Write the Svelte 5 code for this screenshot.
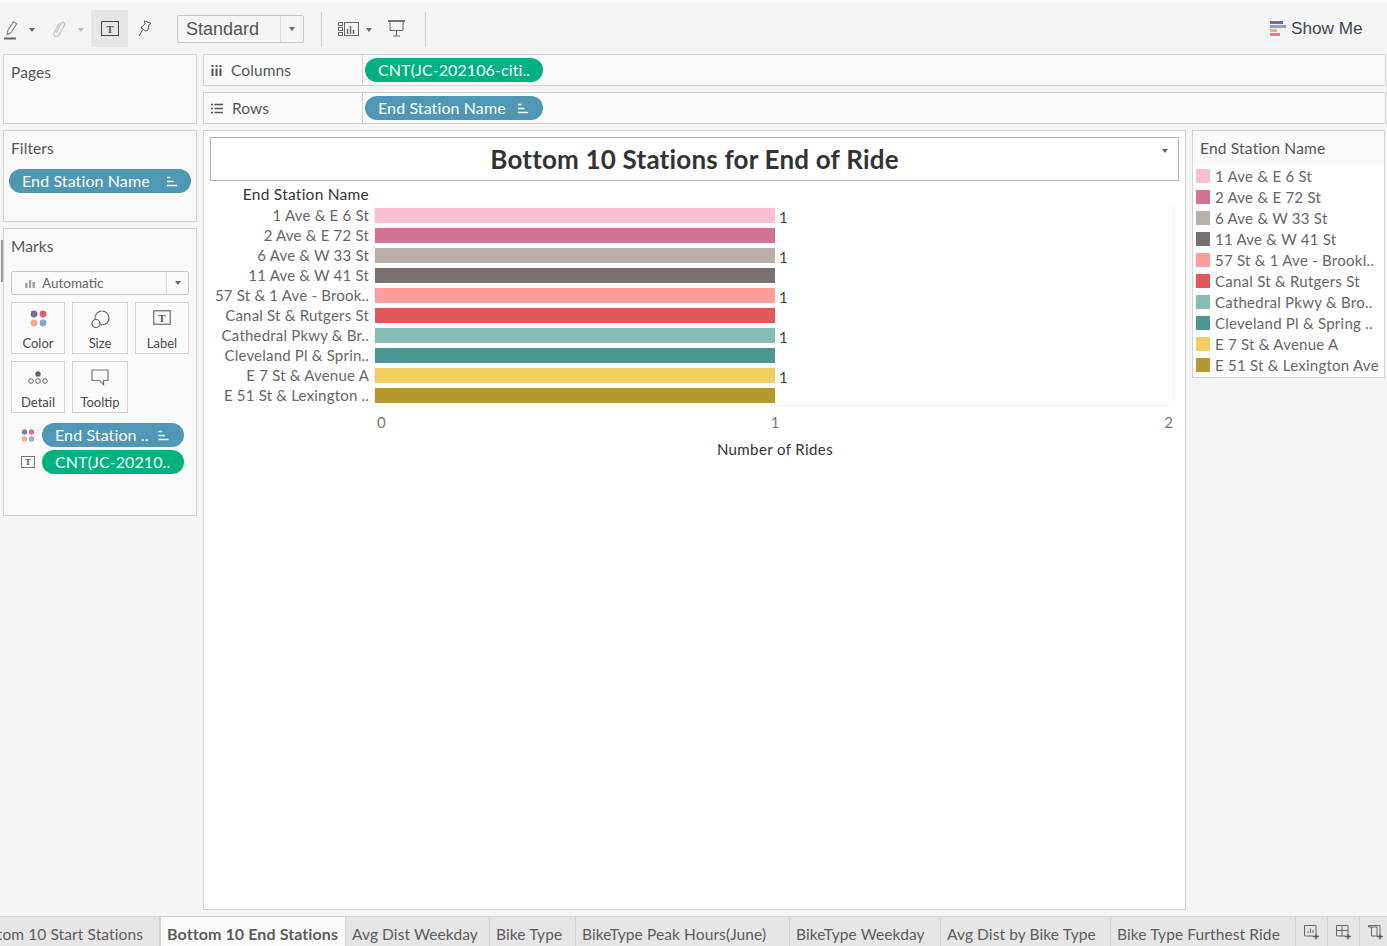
<script>
  const stations = [
    { name: '1 Ave & E 6 St', axis: '1 Ave & E 6 St', legend: '1 Ave & E 6 St', color: '#fabed4', label: true },
    { name: '2 Ave & E 72 St', axis: '2 Ave & E 72 St', legend: '2 Ave & E 72 St', color: '#d37295', label: false },
    { name: '6 Ave & W 33 St', axis: '6 Ave & W 33 St', legend: '6 Ave & W 33 St', color: '#b9aea8', label: true },
    { name: '11 Ave & W 41 St', axis: '11 Ave & W 41 St', legend: '11 Ave & W 41 St', color: '#796f6c', label: false },
    { name: '57 St', axis: '57 St & 1 Ave - Brook..', legend: '57 St & 1 Ave - Brookl..', color: '#ff9d9a', label: true },
    { name: 'Canal', axis: 'Canal St & Rutgers St', legend: 'Canal St & Rutgers St', color: '#e3565b', label: false },
    { name: 'Cath', axis: 'Cathedral Pkwy & Br..', legend: 'Cathedral Pkwy & Bro..', color: '#86bcb6', label: true },
    { name: 'Clev', axis: 'Cleveland Pl & Sprin..', legend: 'Cleveland Pl & Spring ..', color: '#499894', label: false },
    { name: 'E7', axis: 'E 7 St & Avenue A', legend: 'E 7 St & Avenue A', color: '#f1ce63', label: true },
    { name: 'E51', axis: 'E 51 St & Lexington ..', legend: 'E 51 St & Lexington Ave', color: '#b6992d', label: false }
  ];
  const tabs = [
    { t: 'Bottom 10 Start Stations', w: 160, clip: true },
    { t: 'Bottom 10 End Stations', w: 186, active: true },
    { t: 'Avg Dist Weekday', w: 144 },
    { t: 'Bike Type', w: 86 },
    { t: 'BikeType Peak Hours(June)', w: 214 },
    { t: 'BikeType Weekday', w: 151 },
    { t: 'Avg Dist by Bike Type', w: 170 },
    { t: 'Bike Type Furthest Ride', w: 185 }
  ];
</script>

{#snippet sortIcon()}
  <svg class="sort" width="11" height="11" viewBox="0 0 11 11"><path d="M0 1.5h3.5M0 5.5h6.5M0 9.500h10" stroke="#fff" stroke-width="1.600" fill="none"/></svg>
{/snippet}

<div class="app">
  <div class="strip"></div>

  <div class="toolbar">
    <div class="tool t-pen">
      <svg width="14" height="20" viewBox="0 0 14 20"><path d="M3.200 14.500 L3.800 10.500 L9.500 1.800 L12.700 3.800 L7 12.500 Z" fill="#fff" stroke="#8a8a8a" stroke-width="1.300"/><path d="M0 18.500h12" stroke="#666" stroke-width="2"/></svg>
    </div>
    <span class="caret t-c1"></span>
    <div class="tool t-clip">
      <svg width="14" height="18" viewBox="0 0 14 18"><path d="M4.500 12.500 L9 3.500 C10 1.500 13.200 2.500 12.500 5 L7 15 C5 18 0.500 16 2 13 L7 3.500" fill="none" stroke="#c8c8c8" stroke-width="1.500"/></svg>
    </div>
    <span class="caret light t-c2"></span>
    <div class="tool active">
      <svg width="18" height="15" viewBox="0 0 18 15"><rect x="0.500" y="0.500" width="17" height="14" fill="none" stroke="#444" stroke-width="1"/><text x="9" y="11.500" text-anchor="middle" class="svgt">T</text></svg>
    </div>
    <div class="tool t-pin">
      <svg width="14" height="17" viewBox="0 0 14 17"><path d="M6.500 0.800 L13 3.500 L10.800 5.200 L10 9.800 L8 11.200 L3 7.800 L4.500 6 L7 4 Z M4.800 9.500 L1 16" fill="none" stroke="#555" stroke-width="1"/></svg>
    </div>
    <div class="select std"><span>Standard</span><i><span class="caret"></span></i></div>
    <div class="sep s1"></div>
    <div class="tool t-fit">
      <svg width="21" height="14" viewBox="0 0 21 14"><g fill="none" stroke="#666"><rect x="0.500" y="0.500" width="4" height="3"/><rect x="0.500" y="5.500" width="4" height="3"/><rect x="0.500" y="10.500" width="4" height="3"/><rect x="6.500" y="0.500" width="14" height="13"/></g><path d="M9.500 12v-5M12.500 12v-8M15.500 12v-4" stroke="#666" stroke-width="1.500"/></svg>
    </div>
    <span class="caret t-c3"></span>
    <div class="tool t-pres">
      <svg width="17" height="17" viewBox="0 0 17 17"><path d="M0 1h17" stroke="#555" stroke-width="1.600"/><path d="M2 1.500v9h13v-9M8.500 10.500v5M5 16h7" fill="none" stroke="#666"/></svg>
    </div>
    <div class="sep s2"></div>
    <div class="showme">
      <svg width="16" height="16" viewBox="0 0 16 16"><rect x="0" y="0" width="13" height="3" fill="#7b6a94"/><rect x="0" y="4" width="16" height="3" fill="#87a6cb"/><rect x="0" y="8" width="7" height="3" fill="#f5ab81"/><rect x="0" y="12" width="10" height="3" fill="#fb7186"/></svg>
      <span>Show Me</span>
    </div>
  </div>

  <div class="work">
    <aside class="left">
      <section class="card pages"><h3>Pages</h3></section>
      <section class="card filters">
        <h3>Filters</h3>
        <div class="pill blue wide"><span>End Station Name</span>{@render sortIcon()}</div>
      </section>
      <section class="card marks">
        <div class="handle"></div>
        <h3>Marks</h3>
        <div class="select auto">
          <span class="autol">
            <svg width="10" height="9" viewBox="0 0 10 9"><path d="M1.250 9V4M5 9V1M8.750 9V3" stroke="#a5a5a5" stroke-width="2.500"/></svg>
            Automatic
          </span>
          <i><span class="caret"></span></i>
        </div>
        <div class="markbtns">
          <div class="mbtn">
            <svg width="17" height="17" viewBox="0 0 17 17"><circle cx="4" cy="4" r="3.400" fill="#7b6a94"/><circle cx="13" cy="4" r="3.400" fill="#f0586f"/><circle cx="4" cy="13" r="3.400" fill="#f5ab81"/><circle cx="13" cy="13" r="3.400" fill="#87a6cb"/></svg>
            <span>Color</span>
          </div>
          <div class="mbtn">
            <svg width="19" height="19" viewBox="0 0 19 19"><circle cx="11" cy="8" r="7" fill="none" stroke="#666" stroke-width="1.200"/><circle cx="5" cy="13.500" r="4" fill="#fafafa" stroke="#666" stroke-width="1.200"/></svg>
            <span>Size</span>
          </div>
          <div class="mbtn">
            <svg width="18" height="15" viewBox="0 0 18 15"><rect x="0.750" y="0.750" width="16.500" height="13.500" fill="none" stroke="#777" stroke-width="1.300"/><text x="9" y="11.500" text-anchor="middle" class="svgt">T</text></svg>
            <span>Label</span>
          </div>
          <div class="mbtn low">
            <svg width="20" height="13" viewBox="0 0 20 13"><circle cx="10" cy="3" r="2.700" fill="#666"/><g fill="none" stroke="#666"><circle cx="3" cy="10" r="2.300"/><circle cx="10" cy="10" r="2.300"/><circle cx="17" cy="10" r="2.300"/></g></svg>
            <span>Detail</span>
          </div>
          <div class="mbtn">
            <svg width="18" height="17" viewBox="0 0 18 17"><path d="M1 1h16v10.500h-4.500v4l-4-4H1z" fill="none" stroke="#777" stroke-width="1.200"/></svg>
            <span>Tooltip</span>
          </div>
        </div>
        <div class="markpills">
          <div class="mrow">
            <svg width="13" height="13" viewBox="0 0 13 13"><circle cx="3" cy="3" r="2.700" fill="#8b7ba0"/><circle cx="10" cy="3" r="2.700" fill="#f0687f"/><circle cx="3" cy="10" r="2.700" fill="#f5ab81"/><circle cx="10" cy="10" r="2.700" fill="#92aed0"/></svg>
            <div class="pill blue small"><span>End Station ..</span>{@render sortIcon()}</div>
          </div>
          <div class="mrow">
            <svg width="14" height="12" viewBox="0 0 14 12"><rect x="0.500" y="0.500" width="13" height="11" fill="none" stroke="#777"/><text x="7" y="9" text-anchor="middle" class="svgt s">T</text></svg>
            <div class="pill green small"><span>CNT(JC-20210..</span></div>
          </div>
        </div>
      </section>
    </aside>

    <div class="center">
      <div class="shelf">
        <div class="shead">
          <svg width="11" height="11" viewBox="0 0 11 11"><path d="M1.500 3.500V11M5.500 3.500V11M9.500 3.500V11M1.500 0v2M5.500 0v2M9.500 0v2" stroke="#555" stroke-width="2"/></svg>
          <span>Columns</span>
        </div>
        <div class="sbody"><div class="pill green shelfpill"><span>CNT(JC-202106-citi..</span></div></div>
      </div>
      <div class="shelf">
        <div class="shead">
          <svg width="12" height="11" viewBox="0 0 12 11"><path d="M0 1.500h2M3.500 1.500H12M0 5.500h2M3.500 5.500H12M0 9.500h2M3.500 9.500H12" stroke="#555" stroke-width="1.600"/></svg>
          <span>Rows</span>
        </div>
        <div class="sbody"><div class="pill blue shelfpill"><span>End Station Name</span>{@render sortIcon()}</div></div>
      </div>

      <div class="stage">
        <div class="view">
          <div class="title">
            <h1>Bottom 10 Stations for End of Ride</h1>
            <span class="caret tcaret"></span>
          </div>
          <div class="chart">
            <div class="chead">End Station Name</div>
            <div class="cbody">
              <div class="labels">
                {#each stations as s}<div class="rowlabel">{s.axis}</div>{/each}
              </div>
              <div class="pane">
                {#each stations as s}
                  <div class="barrow">
                    <div class="bar" style="background:{s.color}"></div>
                    {#if s.label}<span class="val">1</span>{/if}
                  </div>
                {/each}
              </div>
            </div>
            <div class="axis"><span>0</span><span>1</span><span>2</span></div>
            <div class="axtitle">Number of Rides</div>
          </div>
        </div>
        <div class="legend">
          <div class="lhead">End Station Name</div>
          <div class="litems">
            {#each stations as s}
              <div class="litem"><i style="background:{s.color}"></i><span>{s.legend}</span></div>
            {/each}
          </div>
        </div>
      </div>
    </div>
  </div>

  <div class="tabs">
    {#each tabs as tab}
      <div class="tab" class:active={tab.active} class:clip={tab.clip} style="width:{tab.w}px"><span>{tab.t}</span></div>
    {/each}
    <div class="tab icon">
      <svg width="15" height="15" viewBox="0 0 15 15"><path d="M9 11H.500V.500H12V8" fill="none" stroke="#666"/><path d="M4 8V6M6.500 8V3.500M9 8V5" stroke="#666"/><path d="M12 8.500v6M9 11.500h6" stroke="#555" stroke-width="1.500"/></svg>
    </div>
    <div class="tab icon">
      <svg width="15" height="15" viewBox="0 0 15 15"><path d="M9 11H.500V.500H12V8M.500 5.500H12M6 .500V11" fill="none" stroke="#666"/><path d="M12 8.500v6M9 11.500h6" stroke="#555" stroke-width="1.500"/></svg>
    </div>
    <div class="tab icon">
      <svg width="15" height="15" viewBox="0 0 15 15"><path d="M9 11H3.500V2H.500V.500H9M9 .500H12V8M3.500 2H9V11" fill="none" stroke="#666"/><path d="M12 8.500v6M9 11.500h6" stroke="#555" stroke-width="1.500"/></svg>
    </div>
  </div>
</div>

<style>
  :global(body) { margin: 0; background: #f5f5f5; }
  .app {
    width: 1387px; height: 946px; overflow: hidden;
    display: flex; flex-direction: column;
    font-family: Lato, "Open Sans", sans-serif;
    color: #555; background: #f5f5f5;
  }
  .strip { height: 3px; background: #fafafa; flex: none; }

  .toolbar { height: 51px; flex: none; position: relative; font-family: "Liberation Sans", Arial, sans-serif; }
  .toolbar > * { position: absolute; }
  .tool { display: flex; align-items: center; justify-content: center; height: 37px; top: 7px; }
  .t-pen { left: 4px; width: 14px; top: 8px; }
  .t-clip { left: 52px; width: 14px; }
  .active.tool { left: 91px; width: 37px; background: #e6e6e6; }
  .t-pin { left: 138px; width: 14px; }
  .t-fit { left: 338px; width: 21px; }
  .t-pres { left: 388px; width: 17px; }
  .caret { display: inline-block; width: 0; height: 0; border-left: 3.500px solid transparent; border-right: 3.500px solid transparent; border-top: 4px solid #666; }
  .caret.light { border-top-color: #bbb; }
  .t-c1 { left: 29px; top: 25px; }
  .t-c2 { left: 78px; top: 25px; }
  .t-c3 { left: 366px; top: 25px; }
  .select { display: flex; border: 1px solid #c8c8c8; border-radius: 2px; box-sizing: border-box; background: #f5f5f5; }
  .select i { margin-left: auto; display: flex; align-items: center; justify-content: center; border-left: 1px solid #ddd; }
  .std { left: 177px; top: 12px; width: 127px; height: 28px; align-items: center; font-size: 18px; color: #555; padding-left: 8px; }
  .std i { width: 22px; height: 100%; }
  .sep { width: 1px; height: 35px; background: #d4d4d4; top: 9px; }
  .s1 { left: 321px; }
  .s2 { left: 425px; }
  .showme { left: 1270px; top: 15px; display: flex; align-items: center; gap: 5px; font-size: 17.200px; color: #3b4652; }

  .work { flex: 1; min-height: 0; display: grid; grid-template-columns: 194px 1fr; column-gap: 6px; padding: 0 1px 6px 3px; }
  .left { display: flex; flex-direction: column; gap: 6px; }
  .card { box-sizing: border-box; border: 1px solid #d4d4d4; background: #fafafa; position: relative; }
  h3 { margin: 0; font-weight: 400; font-size: 15.500px; color: #555; position: absolute; left: 7px; top: 8px; line-height: 18px; letter-spacing: 0.100px; }
  .pages { height: 70px; }
  .filters { height: 92px; }
  .marks { height: 288px; }
  .handle { position: absolute; left: -3px; top: 11px; width: 2px; height: 42px; background: #999; }

  .pill { display: flex; align-items: center; box-sizing: border-box; height: 24px; border-radius: 12px; color: #fff; font-size: 16px; letter-spacing: 0.100px; white-space: nowrap; }
  .pill span { position: relative; top: -1px; }
  .pill.blue { background: #4e97b5; }
  .pill.green { background: #00b180; }
  .pill .sort { margin-left: auto; }
  .wide { position: absolute; left: 5px; top: 38px; width: 182px; padding: 0 13px; }
  .shelfpill { width: 178px; padding: 0 14px 0 13px; margin-left: 2px; }
  .small { width: 142px; padding: 0 13px; }

  .auto { position: absolute; left: 7px; top: 42px; width: 178px; height: 24px; align-items: center; font-size: 13.500px; color: #666; background: #fafafa; padding-left: 13px; }
  .autol { display: flex; align-items: center; gap: 7px; }
  .auto i { width: 21px; height: 100%; }
  .markbtns { position: absolute; left: 7px; top: 73px; display: grid; grid-template-columns: 54px 56px 54px; column-gap: 7px; row-gap: 7px; }
  .mbtn { box-sizing: border-box; height: 52px; border: 1px solid #d4d4d4; display: flex; flex-direction: column; align-items: center; justify-content: space-between; padding: 7px 0 2px; font-size: 13px; color: #4a4a4a; }
  .mbtn.low { padding-top: 9px; }
  .markpills { position: absolute; left: 17px; top: 194px; display: flex; flex-direction: column; gap: 3px; }
  .mrow { display: flex; align-items: center; gap: 7px; }
  .mrow svg { width: 14px; flex: none; }

  .center { display: flex; flex-direction: column; gap: 6px; min-width: 0; }
  .shelf { height: 32px; flex: none; box-sizing: border-box; border: 1px solid #d4d4d4; background: #fafafa; display: flex; }
  .shead { width: 159px; box-sizing: border-box; border-right: 1px solid #d4d4d4; display: flex; align-items: center; gap: 9px; padding-left: 7px; font-size: 15.500px; letter-spacing: 0.100px; color: #555; }
  .sbody { flex: 1; display: flex; align-items: center; background: #fafafa; }

  .stage { flex: 1; min-height: 0; display: flex; gap: 6px; align-items: flex-start; }
  .view { width: 983px; height: 780px; box-sizing: border-box; border: 1px solid #d4d4d4; background: #fff; padding: 6px; }
  .title { height: 44px; box-sizing: border-box; border: 1px solid #b4b4b4; position: relative; display: flex; align-items: center; justify-content: center; }
  h1 { margin: 0; font-size: 26px; font-weight: 700; letter-spacing: 0.200px; color: #333; line-height: 1; }
  .tcaret { position: absolute; right: 10px; top: 11px; }

  .chart { margin-left: -6px; }
  .chead { width: 165px; text-align: right; font-size: 15.500px; letter-spacing: 0.250px; color: #333; line-height: 18px; margin-top: 4px; white-space: nowrap; }
  .cbody { display: flex; margin-top: 2px; }
  .labels { width: 165px; flex: none; padding-top: 1px; margin-right: 5px; }
  .rowlabel { height: 20px; line-height: 18px; text-align: right; font-size: 15px; color: #666; white-space: nowrap; letter-spacing: 0.200px; }
  .pane { width: 800px; height: 201px; box-sizing: border-box; padding-top: 3px; border-left: 1px solid #f2f2f2; border-right: 1px solid #f2f2f2; border-bottom: 1px solid #f2f2f2; }
  .barrow { height: 20px; display: flex; }
  .bar { width: 400px; height: 15px; }
  .val { font-size: 15px; line-height: 18px; color: #444; margin-left: 4px; }
  .axis { position: relative; height: 20px; margin-left: 171px; width: 800px; margin-top: 7px; font-size: 15px; color: #777; display: flex; justify-content: space-between; line-height: 18px; padding-left: 2px; padding-right: 2px; box-sizing: border-box; }
  .axtitle { width: 800px; margin-left: 171px; text-align: center; font-size: 15px; letter-spacing: 0.400px; color: #333; line-height: 18px; margin-top: 7px; }

  .legend { width: 193px; height: 248px; box-sizing: border-box; border: 1px solid #d4d4d4; background: #fff; }
  .lhead { height: 34px; background: #fafafa; font-size: 15.500px; letter-spacing: 0.200px; color: #555; line-height: 34px; padding-left: 7px; }
  .litem { height: 21px; display: flex; align-items: center; gap: 5px; padding-left: 3px; font-size: 15px; letter-spacing: 0.250px; color: #666; white-space: nowrap; }
  .litem i { width: 14px; height: 14px; flex: none; }

  .tabs { height: 30px; flex: none; display: flex; background: #e6e6e6; border-top: 1px solid #d4d4d4; box-sizing: border-box; overflow: hidden; }
  .tab { flex: none; box-sizing: border-box; border-right: 1px solid #d4d4d4; padding-left: 6px; font-size: 15.500px; letter-spacing: 0.100px; line-height: 35px; color: #5c5c5c; white-space: nowrap; }
  .tab.clip { position: relative; overflow: hidden; padding: 0; }
  .tab.clip span { position: absolute; right: 16px; }
  .tab.active { background: #fafafa; font-weight: 700; font-size: 16px; letter-spacing: 0.100px; line-height: 33px; border-left: 1px solid #d4d4d4; }
  .tab.icon { width: 32px; padding: 0; display: flex; align-items: center; justify-content: center; padding-top: 2px; }

  .svgt { font-family: "Liberation Serif", serif; font-size: 11px; font-weight: 700; fill: #555; }
  .svgt.s { font-size: 9px; }
</style>
